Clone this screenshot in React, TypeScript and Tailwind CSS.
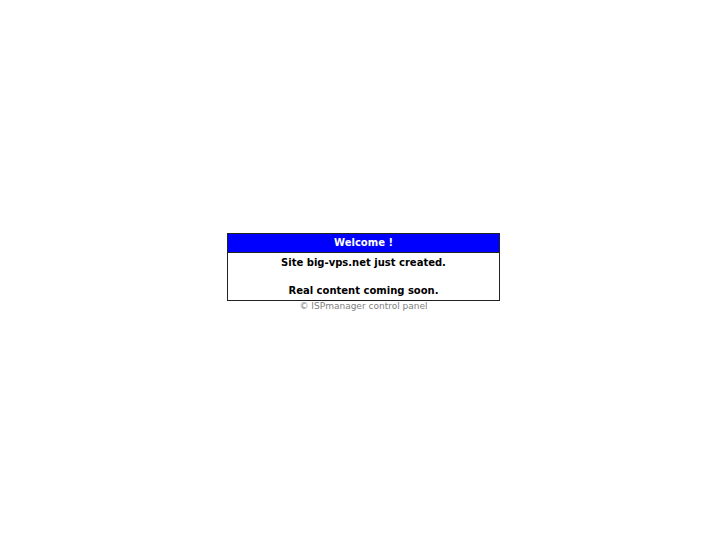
export default function App() {
  return (
    <main className="flex min-h-screen flex-col items-center justify-center bg-white font-['DejaVu_Sans',sans-serif]">
      <section className="w-3/8 border border-[#222222] text-center text-[10px] font-bold text-black">
        <h1 className="border-b border-[#222222] bg-[#0000ff] pt-[3px] pb-1 leading-[11px] text-white">Welcome !</h1>
        <div className="pt-[3px] pb-[2px] leading-[14px]">
          <p>Site big-vps.net just created.</p>
          <br />
          <p>Real content coming soon.</p>
        </div>
      </section>
      <footer className="text-[9px] leading-[11px] text-[#808080]">
        <a href="#">© ISPmanager control panel</a>
      </footer>
    </main>
  );
}
